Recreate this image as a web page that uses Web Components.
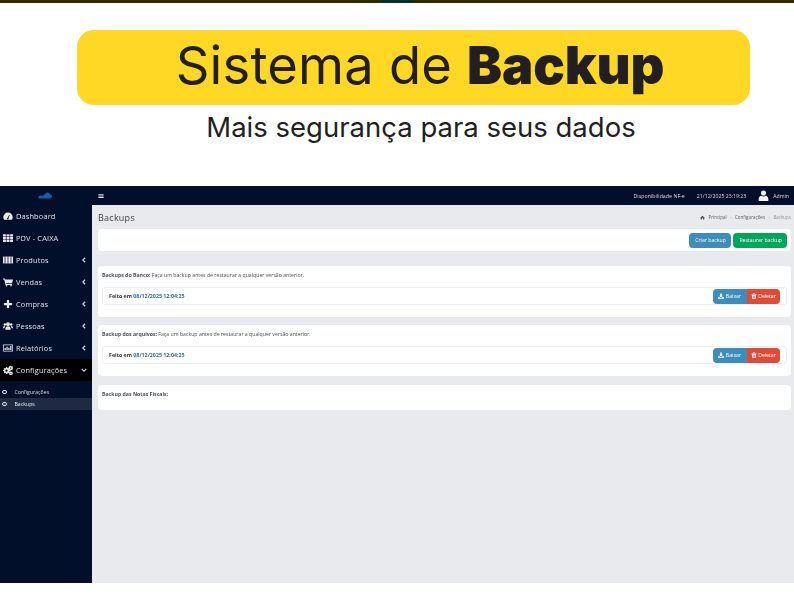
<!DOCTYPE html>
<html lang="pt-BR">
<head>
<meta charset="utf-8">
<title>Sistema de Backup</title>
<style>
  html, body { margin: 0; background: #fff; }
  body { width: 794px; height: 608px; overflow: hidden; font-family: "Open Sans", "Liberation Sans", sans-serif; }
</style>
</head>
<body>
<promo-banner></promo-banner>
<admin-shell>
  <side-nav slot="side">
    <nav-item icon="gauge">Dashboard</nav-item>
    <nav-item icon="grid">PDV - CAIXA</nav-item>
    <nav-item icon="barcode" arrow="left">Produtos</nav-item>
    <nav-item icon="cart" arrow="left">Vendas</nav-item>
    <nav-item icon="plus" arrow="left">Compras</nav-item>
    <nav-item icon="users" arrow="left">Pessoas</nav-item>
    <nav-item icon="chart" arrow="left">Relatórios</nav-item>
    <nav-item icon="cogs" arrow="down" active>Configurações</nav-item>
    <sub-list>
      <sub-item>Configurações</sub-item>
      <sub-item current>Backups</sub-item>
    </sub-list>
  </side-nav>
  <top-bar slot="top"></top-bar>
  <page-head>Backups</page-head>
  <action-card>
    <app-button color="#3c8dbc">Criar backup</app-button>
    <app-button color="#00a65a">Restaurar backup</app-button>
  </action-card>
  <backup-card style="margin-top:15px">
    <span slot="title"><b>Backups do Banco:</b> Faça um backup antes de restaurar a qualquer versão anterior.</span>
    <backup-row date="08/12/2025 12:04:25"></backup-row>
  </backup-card>
  <backup-card style="margin-top:8px">
    <span slot="title"><b>Backup dos arquivos:</b> Faça um backup antes de restaurar a qualquer versão anterior.</span>
    <backup-row date="08/12/2025 12:04:25"></backup-row>
  </backup-card>
  <backup-card style="margin-top:9px" empty>
    <span slot="title"><b>Backup das Notas Fiscais:</b></span>
  </backup-card>
</admin-shell>

<script>
const ICONS = {
  gauge: '<path d="M8 2.5a7.5 7.5 0 0 0-7.5 7.5c0 1.5.4 2.8 1.1 3.9h12.8c.7-1.1 1.1-2.4 1.1-3.9A7.5 7.5 0 0 0 8 2.5zM7.2 11l2.6-5 .9.4-2 5.1a1.2 1.2 0 1 1-1.5-.5z" fill-rule="evenodd"/>',
  grid: '<path d="M0 2h4.6v3.4H0zM5.7 2h4.6v3.4H5.7zM11.4 2H16v3.4h-4.6zM0 6.4h4.6v3.4H0zM5.7 6.4h4.6v3.4H5.7zM11.4 6.4H16v3.4h-4.6zM0 10.8h4.6v3.4H0zM5.7 10.8h4.6v3.4H5.7zM11.4 10.8H16v3.4h-4.6z"/>',
  barcode: '<path d="M0 2.5h2.6v11H0zM3.2 2.5h1v11h-1zM4.8 2.5h2.4v11H4.8zM7.8 2.5h1v11h-1zM9.4 2.5h2.4v11H9.4zM12.4 2.5h1v11h-1zM14 2.5h2v11h-2z"/>',
  cart: '<path d="M0 2.5h2.9l.5 1.6H16l-1.5 6H4.9l.3 1.2h9.1v1.3H4.1L1.9 3.8H0z"/><circle cx="5.6" cy="14" r="1.3"/><circle cx="12.8" cy="14" r="1.3"/>',
  plus: '<path d="M6.2 1.5h3.6v4.7h4.7v3.6H9.8v4.7H6.2V9.8H1.5V6.2h4.7z"/>',
  users: '<circle cx="8" cy="5" r="3"/><circle cx="2.9" cy="5.6" r="2"/><circle cx="13.1" cy="5.6" r="2"/><path d="M3.8 14c-.4-3.6 1.2-5.5 4.2-5.5s4.6 1.9 4.2 5.5zM0 11.5C0 9 1 8 3.4 8c-.6 1-.9 2.1-.9 3.5zM16 11.5C16 9 15 8 12.6 8c.6 1 .9 2.1.9 3.5z"/>',
  chart: '<path d="M0 2.5h16v11H0zM1.2 3.7v8.6h13.6V3.7z" fill-rule="evenodd"/><path d="M2.5 8h2v3.3h-2zM5.5 6h2v5.3h-2zM8.5 7.5h2v3.800h-2zM11.5 4.8h2v6.500h-2z"/>',
  cogs: '<path d="M6 3.200l.9.2.4 1.300 1.100.5 1.200-.6.9.9-.6 1.200.5 1.100 1.300.4v1.300l-1.300.4-.5 1.100.6 1.200-.9.9-1.200-.6-1.100.5-.4 1.300H5l-.4-1.300-1.100-.5-1.200.6-.9-.9.6-1.200L1.500 10 .2 9.600V8.300l1.300-.4.5-1.100-.6-1.200.9-.9 1.200.6 1.100-.5L5 3.200zM5.500 7.200a1.800 1.800 0 1 0 0 3.600 1.800 1.800 0 0 0 0-3.600z" fill-rule="evenodd"/><path d="M12.700 1l.4 1 .9.2.9-.6.7.7-.5.900.3.900 1 .3v1l-1 .3-.3.900.5.900-.7.700-.9-.6-.9.3-.3 1h-1l-.3-1-.9-.3-.9.6-.6-.7.5-.9-.4-.9-1-.3v-1l1-.3.4-.9-.5-.9.6-.7.9.6.9-.2.3-1zm-.5 2.900a1 1 0 1 0 0 2 1 1 0 0 0 0-2z" fill-rule="evenodd"/><path d="M13 10l.3.800.7.200.7-.5.6.600-.4.700.2.700.9.300v.900l-.9.300-.2.700.4.700-.6.600-.7-.5-.7.200-.3.800h-.9l-.3-.8-.7-.2-.7.500-.6-.6.4-.7-.2-.7-.8-.3v-.9l.8-.3.200-.7-.4-.7.600-.6.700.5.700-.2.300-.8zm-.4 2.300a.8.800 0 1 0 0 1.600.8.800 0 0 0 0-1.600z" fill-rule="evenodd"/>',
  home: '<path d="M8 2L0 9h2.300v5.500h4.200v-4h3v4h4.200V9H16z"/>',
  download: '<path d="M6 1h4v6h3l-5 5-5-5h3z"/><path d="M0 11h4l2 2.200h4l2-2.200h4v4H0z"/>',
  trash: '<path d="M5.500 1h5l.7 1.500H15v1.800H1V2.500h3.800z"/><path d="M2.300 5.300h11.400L13 15H3zM5 7v6.300h1.200V7zm2.400 0v6.300h1.200V7zm2.400 0v6.300H11V7z" fill-rule="evenodd"/>',
  user: '<circle cx="8" cy="4.300" r="3.700"/><path d="M1 16v-3.200C1 10 3 8.500 4.600 8.200 5.500 9 6.600 9.400 8 9.400s2.500-.4 3.400-1.200C13 8.500 15 10 15 12.800V16z"/>',
  bars: '<path d="M1 3h14v2.400H1zM1 6.800h14v2.400H1zM1 10.600h14V13H1z"/>'
};

function icon(name, size) {
  return `<svg viewBox="0 0 16 16" width="${size}" height="${size}" fill="currentColor" aria-hidden="true">${ICONS[name]}</svg>`;
}

// small helper so every element below is only its template
function define(tag, html, init) {
  customElements.define(tag, class extends HTMLElement {
    constructor() {
      super();
      this.attachShadow({ mode: 'open' }).innerHTML = html;
    }
    connectedCallback() {
      if (init) init(this, this.shadowRoot);
    }
  });
}

define('promo-banner', `
  <style>
    :host { display: block; font-family: Inter, "Noto Sans", sans-serif; color: #231f20; }
    .line { height: 3px; background: #2e2b00; display: flex; justify-content: center; }
    .line i { width: 31px; background: #06302c; border-radius: 0 0 8px 8px; }
    .pill {
      margin: 27px 44px 0 77px; height: 75px; border-radius: 17px; background: #ffd826;
      display: flex; align-items: center; justify-content: center; gap: 15px;
      font-size: 52.500px; font-weight: 400; letter-spacing: .2px; padding: 0 0 5px 13px; box-sizing: border-box;
    }
    b { font-weight: 900; font-size: 52.500px; letter-spacing: -.1px; }
    p { margin: 6px 0 0; text-align: center; font-size: 27.500px; font-weight: 400; line-height: 32px; padding-left: 48px; }
  </style>
  <div class="line"><i></i></div>
  <div class="pill"><span>Sistema de</span><b>Backup</b></div>
  <p>Mais segurança para seus dados</p>`);

define('admin-shell', `
  <style>
    :host {
      display: grid; grid-template-columns: 92px 1fr; grid-template-rows: 19px 1fr;
      height: 397px; margin-top: 43px; background: #e8eaed; overflow: hidden; filter: blur(.35px);
    }
    ::slotted([slot=side]) { grid-row: 1 / 3; }
    main { padding: 0 3px 0 6px; min-width: 0; }
  </style>
  <slot name="side"></slot>
  <slot name="top"></slot>
  <main><slot></slot></main>`);

define('side-nav', `
  <style>
    :host { display: block; background: #020f2a; color: #dfe3ea; }
    .logo { height: 19px; display: flex; align-items: center; justify-content: center; color: #1c5c9e; padding-right: 2px; }
  </style>
  <div class="logo">
    <svg width="14" height="7" viewBox="0 0 14 7" fill="currentColor" aria-hidden="true">
      <path d="M1 6.500C-.2 5.500.3 3.700 2 3.500 3.400 3.300 4.600 3.900 5.600 3.300 6.800 2.500 7.600.6 9.700.5c1.300 0 2 .9 2 1.700 1.500 0 2.500 1 2.300 2.400-.2 1.300-1.200 1.900-2.600 1.900z"/>
    </svg>
  </div>
  <slot></slot>`);

define('nav-item', `
  <style>
    :host { display: flex; align-items: center; height: 22px; padding: 0 5px 0 3px; font-size: 7.400px; letter-spacing: .15px; }
    :host([active]) { background: #000; }
    .ic { width: 10px; height: 10px; margin-right: 3px; display: flex; color: #e8ebf0; }
    .txt { flex: 1; white-space: nowrap; }
    .ar { width: 6px; height: 6px; color: #cfd4dc; }
  </style>
  <span class="ic"></span><span class="txt"><slot></slot></span><svg class="ar" viewBox="0 0 8 8" fill="none" stroke="currentColor" stroke-width="1.600"></svg>`,
  (el, root) => {
    root.querySelector('.ic').innerHTML = icon(el.getAttribute('icon'), 10);
    const ar = el.getAttribute('arrow');
    const svg = root.querySelector('.ar');
    if (ar === 'left') svg.innerHTML = '<path d="M5.500 1L2.500 4l3 3"/>';
    else if (ar === 'down') svg.innerHTML = '<path d="M1 2.500l3 3 3-3"/>';
    else svg.style.display = 'none';
  });

define('sub-list', `
  <style>:host { display: block; padding-top: 5px; }</style><slot></slot>`);

define('sub-item', `
  <style>
    :host { display: flex; align-items: center; height: 12px; padding-left: 2px; font-size: 5.200px; color: #d5dae2; }
    :host([current]) { background: #1e2a40; color: #eef0f4; }
    i { width: 2.500px; height: 2.500px; border: 1px solid #e6e9ee; border-radius: 50%; margin-right: 8px; }
  </style>
  <i></i><slot></slot>`);

define('top-bar', `
  <style>
    :host { display: flex; align-items: center; background: #020f2a; color: #d9dde4; font-size: 5.200px; padding: 0 5px 0 6px; }
    .menu { display: flex; color: #d6dbe3; flex: 1; }
    .nf { margin-right: 12px; letter-spacing: .06px; }
    .clock { margin-right: 12px; }
    .user { display: flex; color: #f2f3f5; margin-right: 4px; }
  </style>
  <span class="menu">${icon('bars', 6)}</span>
  <span class="nf">Disponibilidade NF-e</span>
  <span class="clock">21/12/2025 23:19:23</span>
  <span class="user">${icon('user', 11)}</span>
  <span>Admin</span>`);

define('page-head', `
  <style>
    :host { display: flex; align-items: center; height: 24px; font-size: 9px; color: #3a3f47; letter-spacing: .25px; }
    h1 { flex: 1; margin: 0; font: inherit; }
    nav { display: flex; align-items: center; gap: 3.500px; font-size: 4.500px; color: #555b64; letter-spacing: 0; }
    nav span { color: #a9adb4; }
    nav em { font-style: normal; color: #8d9299; }
  </style>
  <h1><slot></slot></h1>
  <nav>${icon('home', 5)}Principal <span>›</span> Configurações <span>›</span> <em>Backups</em></nav>`);

define('action-card', `
  <style>
    :host { display: flex; justify-content: flex-end; align-items: center; gap: 2px; height: 22px; padding-right: 4px; background: #fff; border-radius: 4px; }
    ::slotted(app-button) { height: 15px; padding: 0 5px; border-radius: 4px; }
  </style>
  <slot></slot>`);

define('app-button', `
  <style>
    :host { display: inline-flex; align-items: center; gap: 1.500px; box-sizing: border-box; color: #fff; font-size: 5.200px; white-space: nowrap; }
    span { display: flex; }
  </style>
  <span class="ic"></span><slot></slot>`,
  (el, root) => {
    el.style.background = el.getAttribute('color');
    const name = el.getAttribute('icon');
    if (name) root.querySelector('.ic').innerHTML = icon(name, 6);
  });

define('backup-card', `
  <style>
    :host { display: block; box-sizing: border-box; height: 51px; padding: 5px 4px 0; background: #fff; border-radius: 4px; font-size: 5.200px; color: #4a4f57; }
    :host([empty]) { height: 25px; }
    .t { line-height: 8px; margin-bottom: 8px; }
    ::slotted(span) { color: #4a4f57; }
  </style>
  <div class="t"><slot name="title"></slot></div>
  <slot></slot>`);

define('backup-row', `
  <style>
    :host { display: flex; align-items: center; height: 18px; box-sizing: border-box; padding: 0 6px 0 6px; border: 1px solid #eceef1; border-radius: 3px; font-size: 5.300px; color: #333; }
    .t { flex: 1; font-weight: 700; }
    time { color: #2a72a8; }
    app-button { height: 15px; padding: 0 5px; justify-content: center; width: 33.500px; }
    .a { border-radius: 4px 0 0 4px; }
    .b { border-radius: 0 4px 4px 0; }
  </style>
  <span class="t">Feito em <time></time></span>
  <app-button class="a" color="#3c8dbc" icon="download">Baixar</app-button>
  <app-button class="b" color="#e04b35" icon="trash">Deletar</app-button>`,
  (el, root) => { root.querySelector('time').textContent = el.getAttribute('date'); });
</script>
</body>
</html>
